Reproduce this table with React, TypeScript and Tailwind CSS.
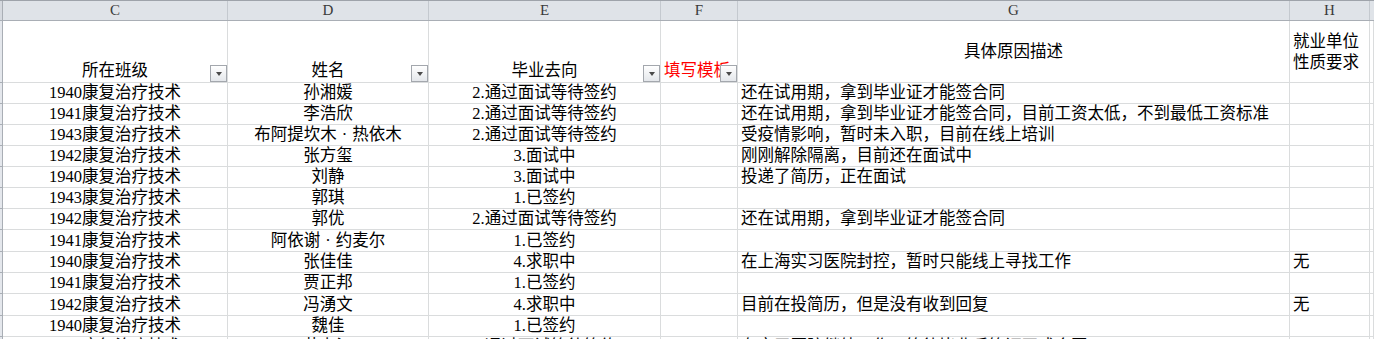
import React from "react";

type Row = { c: string; d: string; e: string; g?: string; h?: string; hgt: number };

const rows: Row[] = [
  { c: "1940康复治疗技术", d: "孙湘媛", e: "2.通过面试等待签约", g: "还在试用期，拿到毕业证才能签合同", hgt: 21 },
  { c: "1941康复治疗技术", d: "李浩欣", e: "2.通过面试等待签约", g: "还在试用期，拿到毕业证才能签合同，目前工资太低，不到最低工资标准", hgt: 21 },
  { c: "1943康复治疗技术", d: "布阿提坎木·热依木", e: "2.通过面试等待签约", g: "受疫情影响，暂时未入职，目前在线上培训", hgt: 21 },
  { c: "1942康复治疗技术", d: "张方玺", e: "3.面试中", g: "刚刚解除隔离，目前还在面试中", hgt: 21 },
  { c: "1940康复治疗技术", d: "刘静", e: "3.面试中", g: "投递了简历，正在面试", hgt: 21 },
  { c: "1943康复治疗技术", d: "郭琪", e: "1.已签约", hgt: 21 },
  { c: "1942康复治疗技术", d: "郭优", e: "2.通过面试等待签约", g: "还在试用期，拿到毕业证才能签合同", hgt: 21 },
  { c: "1941康复治疗技术", d: "阿依谢·约麦尔", e: "1.已签约", hgt: 22 },
  { c: "1940康复治疗技术", d: "张佳佳", e: "4.求职中", g: "在上海实习医院封控，暂时只能线上寻找工作", h: "无", hgt: 21 },
  { c: "1941康复治疗技术", d: "贾正邦", e: "1.已签约", hgt: 21 },
  { c: "1942康复治疗技术", d: "冯湧文", e: "4.求职中", g: "目前在投简历，但是没有收到回复", h: "无", hgt: 22 },
  { c: "1940康复治疗技术", d: "魏佳", e: "1.已签约", hgt: 21 },
  { c: "1941康复治疗技术", d: "艾力江", e: "2.通过面试等待签约", g: "在实习医院继续工作，等待毕业后签订正式合同", hgt: 21 },
];

const letters = [
  { l: "C", w: "w-[225px]" },
  { l: "D", w: "w-[201px]" },
  { l: "E", w: "w-[232px]" },
  { l: "F", w: "w-[77px]" },
  { l: "G", w: "w-[552px]" },
  { l: "H", w: "w-[80px]" },
];

function FilterBtn() {
  return (
    <span className="absolute right-0 bottom-0 flex h-[17px] w-[17px] items-center justify-center border border-[#a3a7ad] bg-linear-to-b from-white to-[#e4e7eb]">
      <span className="h-0 w-0 border-x-[3px] border-t-[4px] border-x-transparent border-t-[#4a4a4a]" />
    </span>
  );
}

// names with a middle dot: SimSun draws the dot full width, so pad it
function Name({ text }: { text: string }) {
  const parts = text.split("·");
  if (parts.length < 2) return <>{text}</>;
  return (
    <>
      {parts[0]}
      <span className="px-[5px]">·</span>
      {parts[1]}
    </>
  );
}

const cell = "relative flex shrink-0 border-r border-b border-[#dadcdd] overflow-hidden whitespace-nowrap";
const txt = "font-['Liberation_Serif','Noto_Sans_CJK_SC',serif] text-[16.5px] leading-[20px] text-black";

export default function App() {
  return (
    <div className="h-[339px] w-[1374px] overflow-hidden bg-white">
      {/* column letters */}
      <div className="flex h-[21px] border-t border-b border-t-[#9ea3aa] border-b-[#a9aeb5] bg-[#dfe3e8]">
        <div className="w-[3px] shrink-0 border-r border-[#a9aeb5] bg-[#d5d9df]" />
        {letters.map((c) => (
          <div
            key={c.l}
            className={`${c.w} flex shrink-0 items-center justify-center border-r border-[#c4c9cf] font-['Liberation_Serif',serif] text-[15px] text-[#3a3a3a]`}
          >
            {c.l}
          </div>
        ))}
        <div className="flex-1" />
      </div>

      {/* header row */}
      <div className="flex h-[62px]">
        <div className="w-[3px] shrink-0 border-r border-b border-[#a9aeb5] bg-[#e4e7ec]" />
        <div className={`${cell} w-[225px] items-end justify-center ${txt}`}>
          <span className="pb-[1px]">所在班级</span>
          <FilterBtn />
        </div>
        <div className={`${cell} w-[201px] items-end justify-center ${txt}`}>
          <span className="pb-[1px]">姓名</span>
          <FilterBtn />
        </div>
        <div className={`${cell} w-[232px] items-end justify-center ${txt}`}>
          <span className="pb-[1px]">毕业去向</span>
          <FilterBtn />
        </div>
        <div className={`${cell} w-[77px] items-end justify-start pl-[3px] ${txt}`}>
          <span className="pb-[1px] text-[#ff0000]">填写模板</span>
          <FilterBtn />
        </div>
        <div className={`${cell} w-[552px] items-center justify-center ${txt}`}>
          <span>具体原因描述</span>
        </div>
        <div className={`${cell} w-[80px] items-center pl-[3px] ${txt}`}>
          <span className="leading-[21px]">
            就业单位
            <br />
            性质要求
          </span>
        </div>
        <div className={`${cell} flex-1`} />
      </div>

      {/* data rows */}
      {rows.map((r, i) => (
        <div key={i} className="flex" style={{ height: r.hgt }}>
          <div className="w-[3px] shrink-0 border-r border-b border-[#a9aeb5] bg-[#e4e7ec]" />
          <div className={`${cell} w-[225px] items-end justify-center ${txt}`}>{r.c}</div>
          <div className={`${cell} w-[201px] items-end justify-center ${txt}`}>
            <Name text={r.d} />
          </div>
          <div className={`${cell} w-[232px] items-end justify-center ${txt}`}>{r.e}</div>
          <div className={`${cell} w-[77px]`} />
          <div className={`${cell} w-[552px] items-end pl-[3px] ${txt}`}>{r.g ?? ""}</div>
          <div className={`${cell} w-[80px] items-end pl-[3px] ${txt}`}>{r.h ?? ""}</div>
          <div className={`${cell} flex-1`} />
        </div>
      ))}
    </div>
  );
}
